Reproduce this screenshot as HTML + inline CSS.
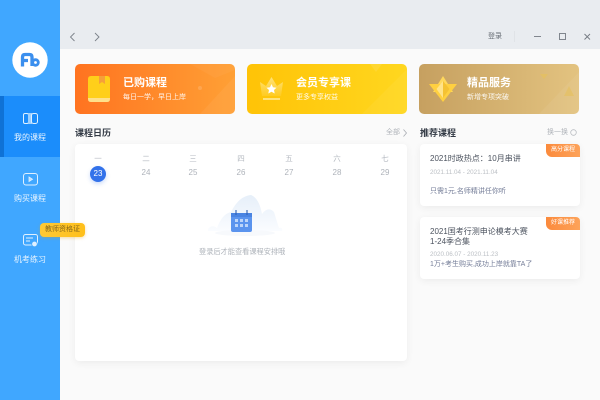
<!DOCTYPE html>
<html lang="zh"><head><meta charset="utf-8">
<style>
*{box-sizing:border-box}
html,body{margin:0;padding:0}
body{width:600px;height:400px;overflow:hidden;position:relative;background:#fafafa;font-family:"Liberation Sans","Noto Sans CJK SC",sans-serif}
.a{position:absolute;white-space:nowrap}
.side{left:0;top:0;width:60px;height:400px;background:#40a7ff}
.active{left:0;top:96px;width:60px;height:61px;background:#1b8dfb}
.bar{left:0;top:96px;width:4px;height:61px;background:#0f72d6}
.nav{left:0;width:60px;text-align:center;color:#e8f4ff;font-size:8px;line-height:12px}
.top{left:60px;top:0;width:540px;height:49px;background:#e9ecf0}
.card{top:64px;width:160px;height:50px;border-radius:5px;overflow:hidden}
.t{font-size:11px;font-weight:bold;color:#fff;line-height:16px}
.s{font-size:7px;color:#fff;line-height:10px;opacity:.9}
.h{font-size:9px;color:#333a45;font-weight:bold;line-height:14px}
.more{font-size:7px;color:#b0b4ba;line-height:10px}
.panel{background:#fff;border-radius:4px;box-shadow:0 2px 8px rgba(0,0,0,.06)}
.wk{width:20px;text-align:center;top:154px;font-size:7.5px;color:#b4b9c0;line-height:10px}
.d{width:20px;text-align:center;top:168px;font-size:8px;color:#aeb3ba;line-height:10px}
.rt{font-size:8px;color:#4c535f;line-height:10px}
.dt{font-size:6.3px;color:#bcc0c5;line-height:9px}
.ds{font-size:7px;color:#747d98;line-height:10px}
.tag{left:546px;width:34px;height:13px;background:linear-gradient(90deg,#fb8a3c,#fda35a);border-radius:0 4px 0 6px;color:#fff;font-size:6px;line-height:13px;text-align:center}
</style></head><body>
<div class="a side"></div>
<div class="a active"></div>
<div class="a bar"></div>
<svg class="a" style="left:12px;top:42px" width="36" height="36" viewBox="0 0 36 36">
<circle cx="18" cy="18" r="17.700" fill="#fff"/>
<path d="M10.500 24.500V15Q10.500 12.500 13 12.500H17.500Q20 12.500 20 15V24M10.500 18.500H16" fill="none" stroke="#3b8fee" stroke-width="3.300"/>
<circle cx="23.500" cy="20.500" r="2.800" fill="none" stroke="#3b8fee" stroke-width="2.800"/>
</svg>
<svg class="a" style="left:22px;top:111px" width="17" height="15" viewBox="0 0 17 15" fill="none" stroke="#dff0ff" stroke-width="1">
<rect x="1.500" y="2.500" width="5" height="10" rx="1.500"/><rect x="6" y="2" width="4" height="11" fill="#9ed0ff" stroke="none"/><rect x="9.500" y="2.500" width="6" height="10" rx="2"/>
</svg>
<div class="a nav" style="top:132px">我的课程</div>
<svg class="a" style="left:22px;top:172px" width="17" height="15" viewBox="0 0 17 15" fill="none" stroke="#dff0ff" stroke-width="1">
<rect x="1.500" y="1.500" width="14" height="11.500" rx="2.500"/><path d="M7 5L10.500 7.200L7 9.500Z" fill="#bfe0ff" stroke-width=".8"/>
</svg>
<div class="a nav" style="top:193px">购买课程</div>
<svg class="a" style="left:22px;top:233px" width="17" height="15" viewBox="0 0 17 15" fill="none" stroke="#dff0ff" stroke-width="1">
<rect x="1.500" y="1.500" width="14" height="10.500" rx="2"/><path d="M4 5H11M4 8H8"/><circle cx="12.500" cy="11" r="2.800" fill="#dff0ff" stroke="#40a7ff" stroke-width=".8"/>
</svg>
<div class="a nav" style="top:254px">机考练习</div>

<div class="a top"></div>
<svg class="a" style="left:68px;top:30px" width="36" height="14" viewBox="0 0 36 14" fill="none" stroke="#7c828a" stroke-width=".9">
<path d="M6.500 3L2.500 7L6.500 11M27 3L31 7L27 11"/>
</svg>
<div class="a" style="left:488px;top:32px;font-size:7px;color:#646a72;line-height:10px">登录</div>
<div class="a" style="left:514px;top:31px;width:1px;height:11px;background:#e0e3e7"></div>
<svg class="a" style="left:533px;top:31px" width="60" height="12" viewBox="0 0 60 12" fill="none" stroke="#757b83" stroke-width=".9">
<path d="M1 5.500H8"/><rect x="26.500" y="2.500" width="6" height="6"/><path d="M51.500 3L57 8.500M57 3L51.500 8.500"/>
</svg>

<!-- banners -->
<div class="a card" style="left:75px;background:linear-gradient(90deg,#ff7320,#ffa035)">
<svg class="a" style="left:0;top:0" width="160" height="50"><path d="M125 50L160 12V50Z" fill="#fff" opacity=".05"/><circle cx="125" cy="24" r="2" fill="#fff" opacity=".15"/><path d="M115 0H160V6L140 14Z" fill="#fff" opacity=".04"/></svg>
<svg class="a" style="left:13px;top:12px" width="22" height="26" viewBox="0 0 22 26">
<path d="M0 3Q0 0 3 0H19Q22 0 22 3V22H0Z" fill="#ffcf1a"/><path d="M0 22H22V23Q22 26 19 26H3Q0 26 0 23Z" fill="#ffe08a"/><path d="M11 0H17V8L14 6L11 8Z" fill="#f5a03a"/>
</svg>
<div class="a t" style="left:48px;top:11px">已购课程</div>
<div class="a s" style="left:48px;top:29px">每日一学，早日上岸</div>
</div>
<div class="a card" style="left:247px;background:linear-gradient(90deg,#ffc307,#ffd71f)">
<svg class="a" style="left:0;top:0" width="160" height="50"><path d="M115 50L160 5V50Z" fill="#fff" opacity=".05"/><path d="M123 0H135L129 8Z" fill="#fff" opacity=".1"/></svg>
<svg class="a" style="left:13px;top:13px" width="24" height="24" viewBox="0 0 24 24">
<defs><linearGradient id="c" x1="0" y1="0" x2="0" y2="1"><stop offset="0" stop-color="#ffe27a"/><stop offset="1" stop-color="#ffcb20"/></linearGradient></defs>
<path d="M0 5L6 9L11.500 0L17 9L23 5L21 19H2Z" fill="url(#c)"/><path d="M11.500 7L13 10.300L16.500 10.700L14 13L14.700 16.500L11.500 14.800L8.300 16.500L9 13L6.500 10.700L10 10.300Z" fill="#fff"/><rect x="3" y="21" width="17" height="2" fill="#ffe27a"/>
</svg>
<div class="a t" style="left:49px;top:11px">会员专享课</div>
<div class="a s" style="left:49px;top:29px">更多专享权益</div>
</div>
<div class="a card" style="left:419px;background:linear-gradient(90deg,#c6a060,#e3c380)">
<svg class="a" style="left:0;top:0" width="160" height="50"><path d="M120 50L160 8V50Z" fill="#fff" opacity=".06"/><path d="M121 10H129L125 15Z" fill="#e6c05c" opacity=".7"/><path d="M150 22L145 32H155Z" fill="#e6c05c" opacity=".6"/></svg>
<svg class="a" style="left:10px;top:12px" width="28" height="26" viewBox="0 0 28 26">
<path d="M14 0L24 16H4Z" fill="#ffd85c"/><path d="M0 8H28L14 26Z" fill="#ffd040"/><path d="M14 5L20.500 13L14 22Z" fill="#f5c233"/><path d="M14 5L7.500 13L14 22Z" fill="#ffe38a"/>
</svg>
<div class="a t" style="left:48px;top:11px">精品服务</div>
<div class="a s" style="left:48px;top:29px">新增专项突破</div>
</div>

<div class="a h" style="left:75px;top:126px">课程日历</div>
<div class="a more" style="left:386px;top:128px">全部</div>
<svg class="a" style="left:402px;top:128px" width="6" height="10" viewBox="0 0 6 10" fill="none" stroke="#a9adb3" stroke-width=".8"><path d="M1.500 1.500L4.500 5L1.500 8.500"/></svg>
<div class="a h" style="left:420px;top:126px">推荐课程</div>
<div class="a more" style="left:547px;top:128px">换一换</div>
<svg class="a" style="left:569px;top:128px" width="9" height="9" viewBox="0 0 9 9" fill="none" stroke="#b9bdc2" stroke-width=".8"><circle cx="4.500" cy="4.500" r="2.800"/></svg>

<!-- calendar -->
<div class="a panel" style="left:75px;top:144px;width:332px;height:217px"></div>
<div class="a wk" style="left:88px">一</div><div class="a wk" style="left:136px">二</div><div class="a wk" style="left:183px">三</div><div class="a wk" style="left:231px">四</div><div class="a wk" style="left:279px">五</div><div class="a wk" style="left:327px">六</div><div class="a wk" style="left:375px">七</div>
<div class="a" style="left:90px;top:166px;width:16px;height:16px;border-radius:50%;background:#3372ea;box-shadow:0 2px 4px rgba(51,114,234,.25);color:#fff;font-size:8px;line-height:16px;text-align:center">23</div>
<div class="a d" style="left:136px">24</div><div class="a d" style="left:183px">25</div><div class="a d" style="left:231px">26</div><div class="a d" style="left:279px">27</div><div class="a d" style="left:327px">28</div><div class="a d" style="left:375px">29</div>
<svg class="a" style="left:205px;top:192px" width="80" height="50" viewBox="0 0 80 50">
<defs><linearGradient id="m" x1="0" y1="0" x2="0" y2="1"><stop offset="0" stop-color="#e6eff9"/><stop offset="1" stop-color="#fafcff"/></linearGradient></defs>
<path d="M3 37Q7 32 12 36Q17 22 26 20Q34 4 46 3Q54 6 57 22Q63 14 69 20Q72 30 74 36Q78 35 77 39H3Z" fill="url(#m)"/>
<ellipse cx="40" cy="41" rx="30" ry="3" fill="#f7f9fc"/>
<rect x="26" y="21" width="21" height="19" rx="2" fill="#5b94ee"/><rect x="26" y="21" width="21" height="4" fill="#4a84e2"/>
<path d="M31 18V23M42 18V23" stroke="#2d5fb5" stroke-width="1.100"/>
<g fill="#bcd5fa"><rect x="30" y="27" width="3" height="3"/><rect x="35" y="27" width="3" height="3"/><rect x="40" y="27" width="3" height="3"/><rect x="30" y="32" width="3" height="3"/><rect x="35" y="32" width="3" height="3"/><rect x="40" y="32" width="3" height="3"/></g>
</svg>
<div class="a" style="left:199px;top:247px;font-size:7.200px;color:#aeb3ba;line-height:10px">登录后才能查看课程安排哦</div>

<!-- recommended -->
<div class="a panel" style="left:420px;top:144px;width:160px;height:62px"></div>
<div class="a tag" style="top:144px">高分课程</div>
<div class="a rt" style="left:430px;top:154px">2021时政热点：10月串讲</div>
<div class="a dt" style="left:430px;top:168px">2021.11.04 - 2021.11.04</div>
<div class="a ds" style="left:430px;top:187px">只需1元,名师精讲任你听</div>
<div class="a panel" style="left:420px;top:217px;width:160px;height:62px"></div>
<div class="a tag" style="top:217px">好课推荐</div>
<div class="a rt" style="left:430px;top:227px">2021国考行测申论模考大赛</div>
<div class="a rt" style="left:430px;top:237px">1-24季合集</div>
<div class="a dt" style="left:430px;top:250px">2020.06.07 - 2020.11.23</div>
<div class="a ds" style="left:430px;top:260px">1万+考生购买,成功上岸就靠TA了</div>

<div class="a" style="left:40px;top:223px;width:45px;height:14px;background:linear-gradient(90deg,#ffc935,#ffbf1a);border-radius:4px;box-shadow:0 1px 3px rgba(230,160,0,.35);color:#86661a;font-size:7px;line-height:14px;text-align:center">教师资格证</div>
</body></html>
